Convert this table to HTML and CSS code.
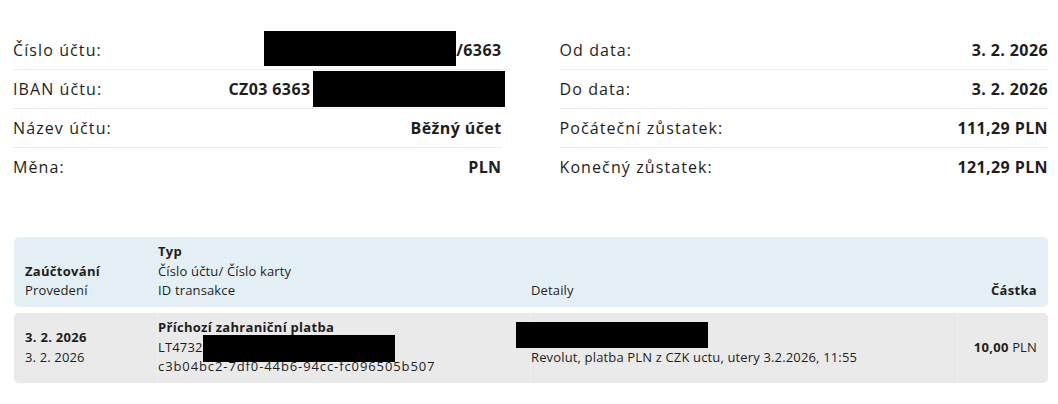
FILE: index.html
```html
<!DOCTYPE html>
<html lang="cs">

<head>
    <meta charset="utf-8">
    <title>Výpis z účtu</title>
    <link rel="stylesheet" href="styles.css">
</head>

<body>
    <div class="page">
        <div class="summary">
            <div class="summary-col">
                <div class="info-row">
                    <span class="info-label">Číslo účtu:</span>
                    <span class="info-value"><span class="redact redact-account"></span>/6363</span>
                </div>
                <div class="info-row">
                    <span class="info-label">IBAN účtu:</span>
                    <span class="info-value">CZ03 6363<span class="redact redact-iban"></span></span>
                </div>
                <div class="info-row">
                    <span class="info-label">Název účtu:</span>
                    <span class="info-value">Běžný účet</span>
                </div>
                <div class="info-row">
                    <span class="info-label">Měna:</span>
                    <span class="info-value">PLN</span>
                </div>
            </div>
            <div class="summary-col">
                <div class="info-row">
                    <span class="info-label">Od data:</span>
                    <span class="info-value">3. 2. 2026</span>
                </div>
                <div class="info-row">
                    <span class="info-label">Do data:</span>
                    <span class="info-value">3. 2. 2026</span>
                </div>
                <div class="info-row">
                    <span class="info-label">Počáteční zůstatek:</span>
                    <span class="info-value">111,29 PLN</span>
                </div>
                <div class="info-row">
                    <span class="info-label">Konečný zůstatek:</span>
                    <span class="info-value">121,29 PLN</span>
                </div>
            </div>
        </div>

        <div class="tx-table">
            <div class="tx-row tx-head">
                <div class="tx-cell">
                    <div class="strong">Zaúčtování</div>
                    <div>Provedení</div>
                </div>
                <div class="tx-cell">
                    <div class="strong">Typ</div>
                    <div>Číslo účtu/ Číslo karty</div>
                    <div>ID transakce</div>
                </div>
                <div class="tx-cell">
                    <div>Detaily</div>
                </div>
                <div class="tx-cell tx-amount">
                    <div class="strong">Částka</div>
                </div>
            </div>
            <div class="tx-row tx-body">
                <div class="tx-cell">
                    <div class="strong">3. 2. 2026</div>
                    <div>3. 2. 2026</div>
                </div>
                <div class="tx-cell">
                    <div class="strong">Příchozí zahraniční platba</div>
                    <div>LT4732<span class="redact redact-card"></span></div>
                    <div class="tx-id">c3b04bc2-7df0-44b6-94cc-fc096505b507</div>
                </div>
                <div class="tx-cell">
                    <div><span class="redact redact-detail"></span></div>
                    <div>Revolut, platba PLN z CZK uctu, utery 3.2.2026, 11:55</div>
                </div>
                <div class="tx-cell tx-amount">
                    <div><span class="strong">10,00</span> PLN</div>
                </div>
            </div>
        </div>
    </div>
</body>

</html>
```

FILE: styles.css
```css
body {
    margin: 0;
    background-color: #ffffff;
    color: #1e1e1e;
    font-family: "Open Sans", "DejaVu Sans", sans-serif;
}

.page {
    padding: 31px 10px 0 13px;
}

/* account summary */
.summary {
    display: grid;
    grid-template-columns: 1fr 1fr;
    column-gap: 58px;
}

.info-row {
    display: flex;
    justify-content: space-between;
    align-items: center;
    padding: 7px 0;
    line-height: 24px;
    border-bottom: 1px solid #ececec;
}

.info-row:last-child {
    border-bottom: none;
}

.info-label {
    font-size: 16px;
    letter-spacing: 1.1px;
}

.info-value {
    font-size: 16px;
    font-weight: 700;
    letter-spacing: 0.4px;
    white-space: nowrap;
}

.redact {
    display: inline-block;
    background-color: #000000;
    width: 192px;
    vertical-align: middle;
}

.redact-account {
    height: 35px;
    margin: -8px 0 -8px 0;
    position: relative;
    top: -3px;
}

.redact-iban {
    height: 36px;
    margin: -8px -3px -8px 2px;
    position: relative;
    top: -2px;
}

.redact-card {
    height: 27px;
    margin: -6px 0;
}

.redact-detail {
    height: 26px;
    margin: -6px 0 -6px -15px;
    position: relative;
    top: -4px;
}

/* transactions */
.tx-table {
    margin: 51px 0 0 1px;
    font-size: 13px;
    line-height: 19.5px;
    letter-spacing: 0.15px;
}

.tx-row {
    display: grid;
    grid-template-columns: 133px 373px 427px 1fr;
    border-radius: 5px;
    padding-left: 11px;
}

.tx-head {
    background-color: #e4f0f5;
    align-items: end;
    padding-top: 5px;
    padding-bottom: 6px;
}

.tx-body {
    background-color: #eaeaea;
    align-items: center;
    margin-top: 6px;
    height: 70px;
}

.tx-body .tx-cell {
    align-self: stretch;
    display: flex;
    flex-direction: column;
    justify-content: center;
}

.tx-body .tx-cell + .tx-cell {
    border-left: 1px solid #efefef;
    margin-left: -1px;
}

.tx-id {
    letter-spacing: 0.9px;
}

.tx-amount {
    text-align: right;
    padding-right: 11px;
}

.tx-body .tx-amount {
    align-items: flex-end;
}

.strong {
    font-weight: 700;
    letter-spacing: 0.3px;
}
```
